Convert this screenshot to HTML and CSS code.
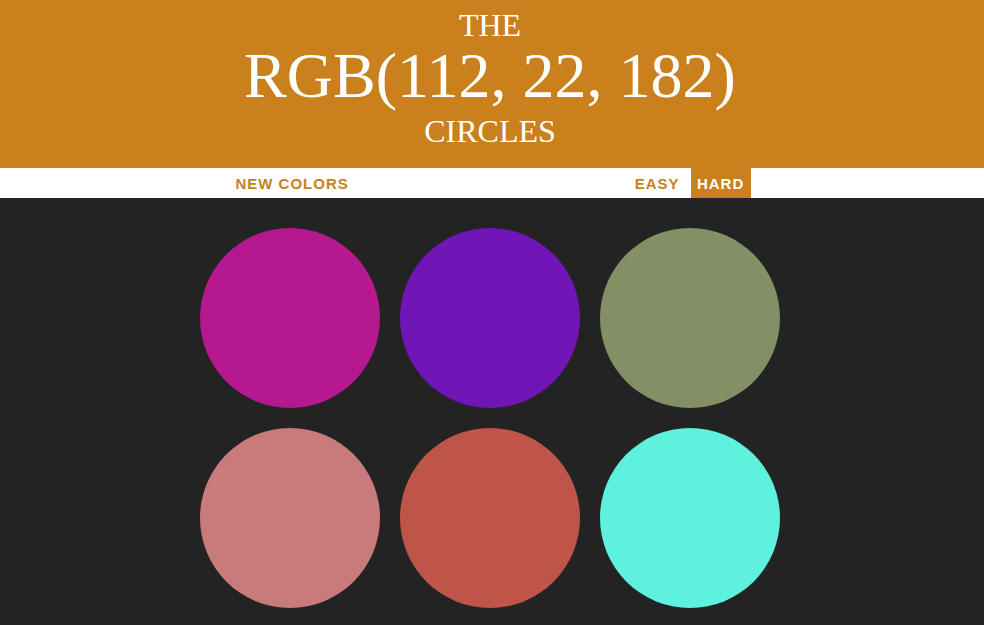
FILE: index.html
```html
<!DOCTYPE html>
<html>
<head>
<meta charset="utf-8">
<title>RGB Circles</title>
<link rel="stylesheet" href="styles.css">
</head>
<body>
<header class="title">
  <div class="line small first">THE</div>
  <div class="line big">RGB(112, 22, 182)</div>
  <div class="line small last">CIRCLES</div>
</header>
<nav class="stripe">
  <div class="stripe-inner">
    <button class="btn">New Colors</button>
    <span class="message"></span>
    <button class="btn">Easy</button>
    <button class="btn selected">Hard</button>
  </div>
</nav>
<main class="main">
  <div class="board">
    <div class="circle c1"></div>
    <div class="circle c2"></div>
    <div class="circle c3"></div>
    <div class="circle c4"></div>
    <div class="circle c5"></div>
    <div class="circle c6"></div>
  </div>
</main>
</body>
</html>
```
FILE: styles.css
```css
html, body {
  margin: 0;
  padding: 0;
  background: #232323;
  overflow: hidden;
}
body {
  height: 625px;
}
.title {
  background: #ca801d;
  color: #ffffff;
  font-family: "Liberation Serif", "Times New Roman", serif;
  font-weight: normal;
  text-align: center;
  text-transform: uppercase;
  padding: 8px 4px 15px 0;
  height: 145px;
}
.line.small {
  font-size: 32px;
}
.line.first {
  line-height: 34px;
}
.line.big {
  font-size: 64px;
  line-height: 67px;
}
.line.last {
  line-height: 44px;
}
.stripe {
  background: #ffffff;
  height: 30px;
}
.stripe-inner {
  display: flex;
  justify-content: center;
  height: 30px;
  padding-right: 4px;
}
.btn {
  border: none;
  background: none;
  margin: 0;
  padding: 0 6px;
  height: 30px;
  font-family: "Liberation Sans", Arial, sans-serif;
  font-size: 15px;
  font-weight: 700;
  letter-spacing: 1px;
  text-transform: uppercase;
  color: #ca801d;
  outline: none;
}
.message {
  width: 274px;
}
.btn.selected {
  background: #ca801d;
  color: #ffffff;
  margin-left: 5px;
  width: 60px;
}
.main {
  padding: 30px 4px 0 0;
}
.board {
  width: 580px;
  margin: 0 auto;
  display: grid;
  grid-template-columns: repeat(3, 180px);
  gap: 20px;
}
.circle {
  width: 180px;
  height: 180px;
  border-radius: 50%;
}
.c1 { background: #b5188f; }
.c2 { background: #7016b6; }
.c3 { background: #839066; }
.c4 { background: #c97a7b; }
.c5 { background: #bf5548; }
.c6 { background: #5ef1de; }
```
